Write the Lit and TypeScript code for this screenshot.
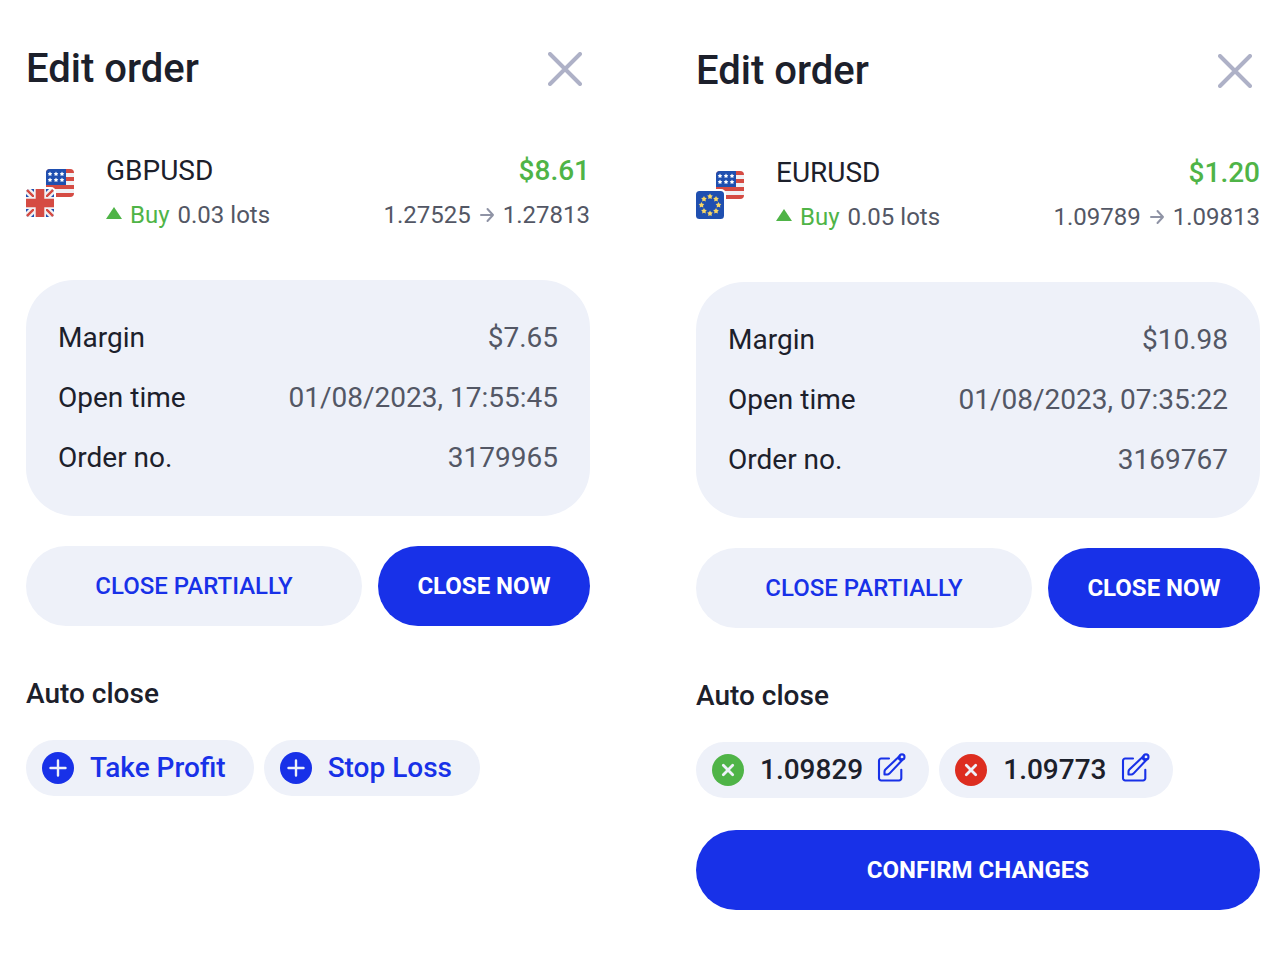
import { LitElement, html, css, svg, nothing } from "lit";
import { customElement, property } from "lit/decorators.js";

interface Level {
  kind: "add" | "profit" | "loss";
  label: string;
}

interface Order {
  symbol: string;
  base: "gb" | "eu";
  profit: string;
  lots: string;
  from: string;
  to: string;
  details: [string, string][];
  levels: Level[];
  confirm: boolean;
}

const orders: Order[] = [
  {
    symbol: "GBPUSD",
    base: "gb",
    profit: "$8.61",
    lots: "0.03 lots",
    from: "1.27525",
    to: "1.27813",
    details: [
      ["Margin", "$7.65"],
      ["Open time", "01/08/2023, 17:55:45"],
      ["Order no.", "3179965"],
    ],
    levels: [
      { kind: "add", label: "Take Profit" },
      { kind: "add", label: "Stop Loss" },
    ],
    confirm: false,
  },
  {
    symbol: "EURUSD",
    base: "eu",
    profit: "$1.20",
    lots: "0.05 lots",
    from: "1.09789",
    to: "1.09813",
    details: [
      ["Margin", "$10.98"],
      ["Open time", "01/08/2023, 07:35:22"],
      ["Order no.", "3169767"],
    ],
    levels: [
      { kind: "profit", label: "1.09829" },
      { kind: "loss", label: "1.09773" },
    ],
    confirm: true,
  },
];

const starPath = (cx: number, cy: number, r: number): string => {
  const points: string[] = [];
  for (let i = 0; i < 10; i++) {
    const radius = i % 2 ? r * 0.55 : r;
    const angle = (Math.PI / 5) * i - Math.PI / 2;
    points.push(`${(cx + radius * Math.cos(angle)).toFixed(2)} ${(cy + radius * Math.sin(angle)).toFixed(2)}`);
  }
  return `M${points.join("L")}Z`;
};

const unionJack = svg`
  <rect y="20" width="28" height="28" fill="#1f4fb0"/>
  <path d="M0 20L28 48M28 20L0 48" stroke="#f1f1f4" stroke-width="7"/>
  <path d="M0 20L28 48M28 20L0 48" stroke="#d54b43" stroke-width="2.4"/>
  <path d="M14 20V48M0 34H28" stroke="#f1f1f4" stroke-width="12"/>
  <path d="M14 20V48M0 34H28" stroke="#d54b43" stroke-width="8.6"/>`;

const euStars = svg`
  <rect y="20" width="28" height="28" fill="#1f4fb0"/>
  ${[0, 1, 2, 3, 4, 5, 6, 7].map((i) => {
    const a = (Math.PI / 4) * i;
    return svg`<path fill="#f8d664" d=${starPath(14 + 8.5 * Math.cos(a), 34 + 8.5 * Math.sin(a), 3)}/>`;
  })}`;

const flags = (base: "gb" | "eu") => html`
  <svg class="flags" viewBox="0 0 48 48" aria-hidden="true">
    <defs>
      <clipPath id="back"><rect x="20" width="28" height="28" rx="4"/></clipPath>
      <clipPath id="front"><rect y="20" width="28" height="28" rx="3.5"/></clipPath>
    </defs>
    <g clip-path="url(#back)">
      <rect x="20" width="28" height="28" fill="#f1f1f4"/>
      <path d="M20 2H48M20 10H48M20 18H48M20 26H48" stroke="#d54b43" stroke-width="4"/>
      <rect x="20" width="20" height="16" fill="#1f4fb0"/>
      ${[24, 30, 36].map((x) => [5, 11].map((y) => svg`<path fill="#fff" d=${starPath(x, y, 2.4)}/>`))}
    </g>
    <rect x="-2" y="18" width="32" height="32" rx="5" fill="#fff"/>
    <g clip-path="url(#front)">${base === "gb" ? unionJack : euStars}</g>
  </svg>`;

const plusIcon = html`
  <svg class="badge" viewBox="0 0 32 32" aria-hidden="true">
    <circle cx="16" cy="16" r="16" fill="#1831e8"/>
    <path d="M16 8.500V23.500M8.500 16H23.500" stroke="#eef1f9" stroke-width="2.4" stroke-linecap="round"/>
  </svg>`;

const removeIcon = (fill: string) => html`
  <svg class="badge" viewBox="0 0 32 32" aria-hidden="true">
    <circle cx="16" cy="16" r="16" fill=${fill}/>
    <path d="M11.300 11.300L20.700 20.700M20.700 11.300L11.300 20.700" stroke="#eef1f9" stroke-width="2.8" stroke-linecap="round"/>
  </svg>`;

const editIcon = html`
  <svg class="edit" viewBox="0 0 30 34" fill="none" stroke="#1831e8" stroke-width="2.1" stroke-linecap="round" stroke-linejoin="round" aria-hidden="true">
    <path d="M12 5.500H4.200A2.200 2.200 0 0 0 2 7.700V25.300A2.200 2.200 0 0 0 4.200 27.500H22.100A2.200 2.200 0 0 0 24.300 25.300V16.800"/>
    <path d="M22.600 3L8.400 16.600Q7.500 17.500 7.500 18.800V21.500H10.300Q11.500 21.500 12.400 20.600L26 6.300M20.800 4.800L24.400 8"/>
    <circle cx="25" cy="3.900" r="2.500"/>
  </svg>`;

@customElement("order-panel")
export class OrderPanel extends LitElement {
  @property({ attribute: false }) order!: Order;

  static styles = css`
    :host {
      display: block;
      color: #1c202b;
      font-family: Roboto, "Liberation Sans", sans-serif;
      font-size: 28px;
      line-height: 32px;
    }
    h2, h3, dl, dd, p { margin: 0; }
    h2, h3 { font-weight: 500; }
    button {
      border: 0;
      margin: 0;
      padding: 0;
      background: none;
      color: inherit;
      font: inherit;
      cursor: pointer;
    }
    svg { display: block; flex: none; }
    .header { display: flex; justify-content: space-between; align-items: center; }
    .title { font-size: 40px; line-height: 48px; }
    .dismiss { padding: 0 8px; }
    .cross { width: 34px; height: 34px; }
    .summary { display: flex; align-items: center; margin-top: 62px; }
    .flags { width: 48px; height: 48px; margin-right: 32px; }
    .lines { flex: 1; display: grid; gap: 12px; }
    .line { display: flex; justify-content: space-between; align-items: center; }
    .profit { color: #4fb447; font-weight: 500; }
    .small { font-size: 24px; color: #535765; }
    .group { display: flex; align-items: center; gap: 8px; }
    .buy { color: #4fb447; }
    .triangle, .arrow { width: 16px; height: 16px; }
    .card {
      display: grid;
      gap: 28px;
      margin-top: 49px;
      padding: 42px 32px;
      border-radius: 48px;
      background: #eef1f9;
    }
    .row { display: flex; justify-content: space-between; }
    .value { color: #535765; }
    .actions { display: grid; grid-template-columns: minmax(0, 1fr) 212px; gap: 16px; margin-top: 30px; }
    .action { height: 80px; border-radius: 40px; font-size: 24px; font-weight: 500; }
    .soft { background: #eef1f9; color: #1831e8; }
    .solid { background: #1831e8; color: #fff; font-weight: 700; }
    .section { margin-top: 52px; font-size: 28px; }
    .chips { display: flex; flex-wrap: wrap; gap: 10px; margin-top: 30px; }
    .chip {
      display: flex;
      align-items: center;
      height: 56px;
      padding: 0 22px 0 16px;
      border-radius: 28px;
      background: #eef1f9;
      font-weight: 500;
    }
    .add { gap: 16px; padding-right: 28px; color: #1831e8; }
    .badge { width: 32px; height: 32px; }
    .level { margin: 0 14px 0 16px; }
    .edit { width: 30px; height: 34px; }
    .wide { width: 100%; margin-top: 32px; }
  `;

  private renderLevel({ kind, label }: Level) {
    if (kind === "add") {
      return html`<button class="chip add" type="button">${plusIcon}<span>${label}</span></button>`;
    }
    const profit = kind === "profit";
    const name = profit ? "Take Profit" : "Stop Loss";
    return html`<div class="chip">
      <button type="button" aria-label="Remove ${name}">${removeIcon(profit ? "#4fb447" : "#dd2d20")}</button>
      <span class="level">${label}</span>
      <button type="button" aria-label="Edit ${name}">${editIcon}</button>
    </div>`;
  }

  render() {
    const o = this.order;
    return html`
      <header class="header">
        <h2 class="title">Edit order</h2>
        <button class="dismiss" type="button" aria-label="Close">
          <svg class="cross" viewBox="0 0 34 34" aria-hidden="true">
            <path d="M2 2L32 32M32 2L2 32" stroke="#aeb1c7" stroke-width="4" stroke-linecap="round"/>
          </svg>
        </button>
      </header>
      <div class="summary">
        ${flags(o.base)}
        <div class="lines">
          <div class="line"><span>${o.symbol}</span><span class="profit">${o.profit}</span></div>
          <div class="line small">
            <span class="group">
              <svg class="triangle" viewBox="0 0 16 16" aria-hidden="true"><path d="M8 0L16 12H0Z" fill="#4fb447"/></svg>
              <span class="buy">Buy</span><span>${o.lots}</span>
            </span>
            <span class="group">
              <span>${o.from}</span>
              <svg class="arrow" viewBox="0 0 16 16" fill="none" stroke="#8f93a5" stroke-width="2" stroke-linecap="round" stroke-linejoin="round" aria-hidden="true">
                <path d="M2 8H14M8.500 2L14 8L8.500 14"/>
              </svg>
              <span>${o.to}</span>
            </span>
          </div>
        </div>
      </div>
      <dl class="card">
        ${o.details.map(([name, value]) => html`<div class="row"><dt>${name}</dt><dd class="value">${value}</dd></div>`)}
      </dl>
      <div class="actions">
        <button class="action soft" type="button">CLOSE PARTIALLY</button>
        <button class="action solid" type="button">CLOSE NOW</button>
      </div>
      <h3 class="section">Auto close</h3>
      <div class="chips">${o.levels.map((level) => this.renderLevel(level))}</div>
      ${o.confirm ? html`<button class="action solid wide" type="button">CONFIRM CHANGES</button>` : nothing}
    `;
  }
}

@customElement("app-root")
export class AppRoot extends LitElement {
  static styles = css`
    :host { display: block; min-height: 100vh; background: #fff; }
    .screens { display: grid; grid-template-columns: repeat(2, minmax(0, 1fr)); }
    .current { padding: 45px 52px 48px 26px; }
    .edited { padding: 47px 24px 48px 54px; }
  `;

  render() {
    return html`<main class="screens">
      <order-panel class="current" .order=${orders[0]}></order-panel>
      <order-panel class="edited" .order=${orders[1]}></order-panel>
    </main>`;
  }
}
